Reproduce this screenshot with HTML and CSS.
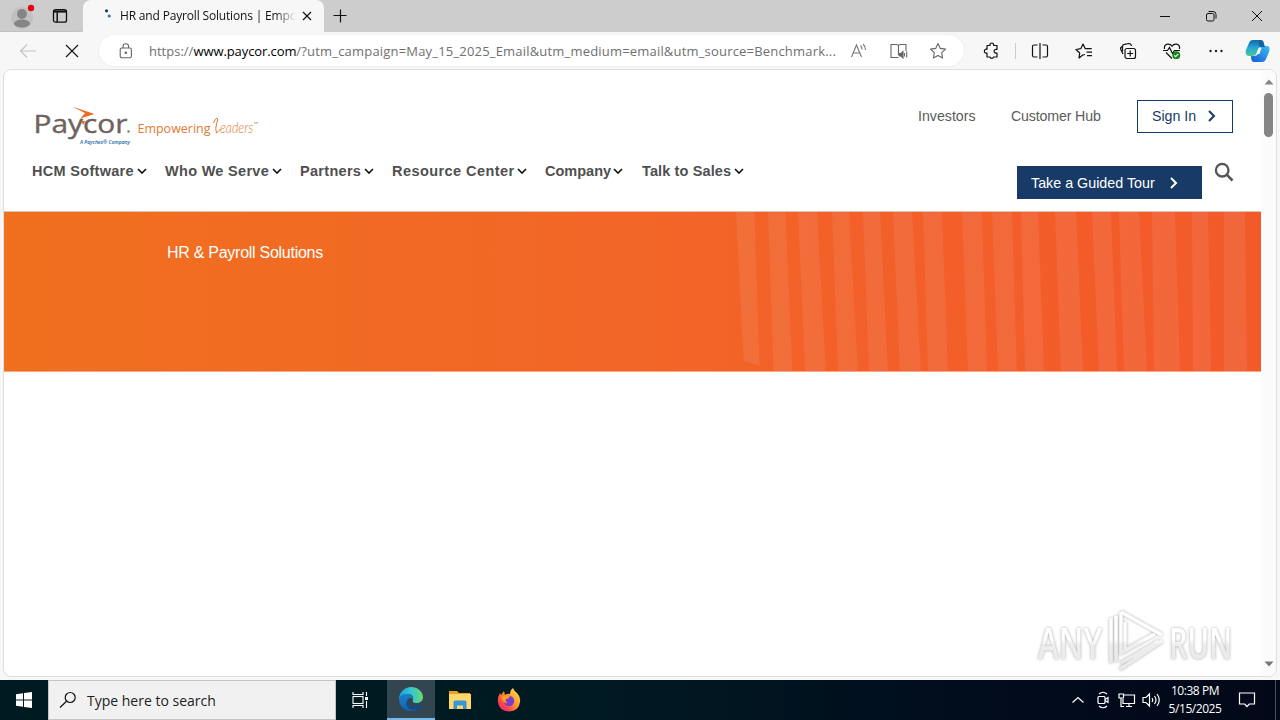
FILE: index.html
```html
<!DOCTYPE html>
<html lang="en">
<head>
<meta charset="utf-8">
<title>HR and Payroll Solutions | Empowering Leaders</title>
<link rel="stylesheet" href="styles.css">
</head>
<body>
<div class="desktop">
  <header class="titlebar">
    <div class="tab-tools">
      <svg class="profile" width="26" height="28" viewBox="0 0 26 28"><circle cx="13" cy="16" r="11" fill="#c0c0c0"/><circle cx="13" cy="12" r="5" fill="#858585"/><ellipse cx="13" cy="21.500" rx="8" ry="4" fill="#858585"/><circle cx="22" cy="6" r="3.200" fill="#e30613"/></svg>
      <svg width="16" height="16" viewBox="0 0 16 16" fill="none" stroke="#111" stroke-width="1.300"><rect x="1.500" y="1.700" width="13" height="12.500" rx="2"/><path d="M1.500 3.500h13" stroke-width="2.200"/><path d="M5.200 4.300v10" stroke-width="1.500"/></svg>
    </div>
    <div class="tab">
      <svg width="12" height="14" viewBox="0 0 12 14"><circle cx="2.500" cy="1.800" r="1.600" fill="#123e6b"/><circle cx="5.200" cy="7" r="1.600" fill="#2d77b8"/></svg>
      <span class="tab-title">HR and Payroll Solutions | Empow</span>
      <svg width="10" height="10" viewBox="0 0 10 10" stroke="#111" stroke-width="1.200"><path d="M1 1l8 8M9 1l-8 8"/></svg>
    </div>
    <svg class="newtab" width="14" height="14" viewBox="0 0 14 14" stroke="#111" stroke-width="1.200"><path d="M7.500 .5v13M.5 6.500h13"/></svg>
    <div class="win-buttons">
      <svg width="12" height="12" viewBox="0 0 12 12" stroke="#111"><path d="M1 6.500h10"/></svg>
      <svg width="12" height="12" viewBox="0 0 12 12" fill="none" stroke="#111"><rect x="1.500" y="3.500" width="7.500" height="7.500" rx="1.500"/><path d="M3.500 1.500h4.500a3 3 0 0 1 3 3v4"/></svg>
      <svg width="12" height="12" viewBox="0 0 12 12" stroke="#111"><path d="M1 1l10 10M11 1L1 11"/></svg>
    </div>
  </header>

  <div class="toolbar">
    <svg class="back" width="18" height="16" viewBox="0 0 18 16" fill="none" stroke="#c4c4c4" stroke-width="1.200"><path d="M17 8H1.500M8 1.500L1.500 8 8 14.500"/></svg>
    <svg class="stop" width="14" height="14" viewBox="0 0 14 14" stroke="#111" stroke-width="1.100"><path d="M1 1l12 12M13 1L1 13"/></svg>
    <div class="address">
      <svg width="14" height="16" viewBox="0 0 14 16" fill="none" stroke="#666" stroke-width="1.100"><rect x="1.200" y="5" width="11.200" height="9.800" rx="1.600"/><path d="M4 5V3.500a2.800 2.800 0 0 1 5.600 0V5"/><circle cx="6.800" cy="9.800" r=".7" fill="#666"/></svg>
      <span class="url"><span class="scheme">https://</span><b>www.paycor.com</b><span class="query">/?utm_campaign=May_15_2025_Email&amp;utm_medium=email&amp;utm_source=Benchmark...</span></span>
      <svg width="18" height="16" viewBox="0 0 18 16" fill="none" stroke="#777" stroke-width="1.100"><path d="M1.500 14L6.500 2l5 12M3.200 10h6.600M10.500 2.500a5 5 0 0 1 1.500 4M13 1a8 8 0 0 1 2.500 6"/></svg>
      <svg width="18" height="16" viewBox="0 0 18 16" fill="none" stroke="#666" stroke-width="1.100"><path d="M8.500 14.500H1V1.500h5.500q2 0 2 2v9M8.500 3.500q0-2 2-2H16V8"/><path d="M9.500 10.500v2.500h1.500l2 2V8.500l-2 2z" fill="#666"/><path d="M14.500 10v3.500M16.700 8.500v6"/></svg>
      <svg width="18" height="18" viewBox="0 0 18 18" fill="none" stroke="#666" stroke-width="1.100" stroke-linejoin="round"><path d="M9 1.500l2.300 4.900 5.200.7-3.800 3.600.9 5.300L9 13.500 4.400 16l.9-5.300L1.500 7.100l5.200-.7z"/></svg>
    </div>
    <div class="actions">
      <svg width="18" height="18" viewBox="0 0 18 18" fill="none" stroke="#111" stroke-width="1.200" stroke-linejoin="round"><path d="M5 3.500h3a1.900 1.900 0 1 1 3.600 0h3.400v3.800h-1a1.900 1.900 0 1 0 0 3.800h1v3.900h-3.400a1.900 1.900 0 0 1-3.600 0H5v-3.900a2 2 0 1 1 0-3.800z"/></svg>
      <i class="divider"></i>
      <svg width="18" height="18" viewBox="0 0 18 18" fill="none" stroke="#111" stroke-width="1.200"><path d="M6.500 3H3a1.500 1.500 0 0 0-1.500 1.500v9A1.500 1.500 0 0 0 3 15h3.500M11.500 3H15a1.500 1.500 0 0 1 1.500 1.500v9A1.500 1.500 0 0 1 15 15h-3.500M9 1v16"/></svg>
      <svg width="18" height="18" viewBox="0 0 18 18" fill="none" stroke="#111" stroke-width="1.200" stroke-linejoin="round"><path d="M10 12.500L7.800 13 4 16l.7-5L1 7.500l4.800-.8L8 2l2.300 4.700h6.400M11.500 10.200H17M12 13.700h5"/></svg>
      <svg width="18" height="18" viewBox="0 0 18 18" fill="none" stroke="#111" stroke-width="1.200"><rect x="6" y="6.500" width="10.500" height="10" rx="2"/><path d="M11.200 8.500v6M8.200 11.500h6M4 12L1.800 7.500Q1 5.500 3 4.500M3.500 9.500V4.500q0-2 2-2.200l4.500-.8q2 0 2.500 2.500"/></svg>
      <svg width="18" height="18" viewBox="0 0 18 18" fill="none" stroke="#111" stroke-width="1.200"><path d="M1.500 7Q.8 3 4.500 2.200 7.500 1.800 9 4.200q1.500-2.400 4.500-2Q17.200 3 16.500 7M3 10.500L9 16.500M0 8.500h4.500l2-3 3 6L11.500 8.500H17"/><circle cx="13.300" cy="13.200" r="3.900" fill="#16831c" stroke="none"/><path d="M11.300 13.300l1.300 1.300 2.700-2.800" stroke="#fff"/></svg>
      <svg width="18" height="18" viewBox="0 0 18 18" fill="#222"><circle cx="3.500" cy="9" r="1.200"/><circle cx="9" cy="9" r="1.200"/><circle cx="14.500" cy="9" r="1.200"/></svg>
      <svg class="copilot" width="26" height="24" viewBox="0 0 26 24"><defs><linearGradient id="cp1" x1="0" y1="0" x2="0" y2="1"><stop offset="0" stop-color="#16679d"/><stop offset=".5" stop-color="#24a7df"/><stop offset="1" stop-color="#52c88a"/></linearGradient><linearGradient id="cp2" x1="0" y1="1" x2="1" y2="0"><stop offset="0" stop-color="#155bd5"/><stop offset="1" stop-color="#39bdf5"/></linearGradient></defs><path d="M8 1h8c3 0 3 4 4 7h-4c-2 0-3 2-4 5s-2 4-5 4H4c-3 0-4-3-3-6l3-7q1-3 4-3z" fill="url(#cp1)"/><path d="M17 23H9c-2 0-3-2-3-6h3c3 0 4-2 5-5s2-5 5-5h3c3 0 3 3 2 6l-3 7q-1 3-4 3z" fill="url(#cp2)"/><path d="M15 1c4 0 3 4 5 7h-5c-1-2-2-4 0-7z" fill="#1263a4"/><path d="M13.500 9h3l-2 6h-3z" fill="#f7f7f7"/></svg>
    </div>
  </div>

  <main class="viewport">
    <div class="page">
      <div class="site-head">
        <div class="site-left">
          <svg class="logo" width="234" height="46" viewBox="32 102 234 46">
            <text class="brand" x="33.500" y="132.500" textLength="94" lengthAdjust="spacingAndGlyphs">Paycor</text>
            <path d="M72 106.500l22.500 7.500-14 4.500 4.500-5.500z" fill="#ef6b21"/>
            <path d="M81.500 121h4l-2.500 4z" fill="#ef6b21"/>
            <rect x="127.500" y="130.500" width="2" height="2" fill="#6e625d"/>
            <text class="sub" x="80" y="143.800" textLength="50" lengthAdjust="spacingAndGlyphs">A Paychex® Company</text>
            <text class="tagline" x="137.500" y="133" textLength="73" lengthAdjust="spacingAndGlyphs">Empowering</text>
            <path d="M213.500 123q2-5 3.500-5 1.500 1-.5 6-1.500 5 0 9 2-1.500 4-4" fill="none" stroke="#e47935"/>
            <text class="script" x="220" y="132.500" textLength="33" lengthAdjust="spacingAndGlyphs">eaders</text>
            <text class="tm" x="253.500" y="126">™</text>
          </svg>
          <nav class="main-nav">
            <span class="n1">HCM Software<svg width="10" height="7" viewBox="0 0 10 7"><path d="M1 1l4 4 4-4"/></svg></span>
            <span class="n2">Who We Serve<svg width="10" height="7" viewBox="0 0 10 7"><path d="M1 1l4 4 4-4"/></svg></span>
            <span class="n3">Partners<svg width="10" height="7" viewBox="0 0 10 7"><path d="M1 1l4 4 4-4"/></svg></span>
            <span class="n4">Resource Center<svg width="10" height="7" viewBox="0 0 10 7"><path d="M1 1l4 4 4-4"/></svg></span>
            <span class="n5">Company<svg width="10" height="7" viewBox="0 0 10 7"><path d="M1 1l4 4 4-4"/></svg></span>
            <span class="n6">Talk to Sales<svg width="10" height="7" viewBox="0 0 10 7"><path d="M1 1l4 4 4-4"/></svg></span>
          </nav>
        </div>
        <div class="site-right">
          <div class="utility">
            <span class="investors">Investors</span><span class="hub">Customer Hub</span>
            <a class="sign-in"><span>Sign In</span><svg width="8" height="12" viewBox="0 0 8 12"><path d="M1 1l5 5-5 5"/></svg></a>
          </div>
          <div class="cta-row">
            <a class="tour"><span>Take a Guided Tour</span><svg width="8" height="12" viewBox="0 0 8 12"><path d="M1 1l5 5-5 5"/></svg></a>
            <svg class="search" width="20" height="20" viewBox="0 0 20 20" fill="none" stroke="#555" stroke-width="2.300"><circle cx="8.200" cy="8.200" r="6.300"/><path d="M12.700 12.700l5.800 5.800" stroke-width="2.600"/></svg>
          </div>
        </div>
      </div>
      <section class="hero">
        <svg class="stripes" width="529" height="159" viewBox="732 212 529 159" fill="#eee" fill-opacity=".09">
          <path d="M736 212h18.500l5 154-16-5zM768 212h17.500l7 160h-19zM798 212h19l9 160h-21zM832 212h17l9 160h-20zM863 212h17l8 160h-19zM893 212h19l9 160h-21zM923 212h19l6 160h-20zM962 212h20l5 160h-19zM992 212h20l5 160h-19zM1021 212h17l6 160h-19zM1055 212h21l7 160h-22zM1092 212h19l6 160h-18zM1119 212h20l8 160h-23zM1152 212h23l5 160h-26zM1192 212h16l3 160h-18zM1224 212h21l2 160h-23z"/>
        </svg>
        <h1>HR &amp; Payroll Solutions</h1>
      </section>
    </div>
    <div class="scrollbar">
      <svg width="10" height="6" viewBox="0 0 10 6"><path d="M.5 5.500L5 .5l4.500 5z" fill="#858585"/></svg>
      <i class="thumb"></i>
      <svg class="down" width="10" height="6" viewBox="0 0 10 6"><path d="M.5.5L5 5.500 9.500.5z" fill="#777"/></svg>
    </div>
    <svg class="watermark" width="204" height="70" viewBox="1034 606 204 70">
      <defs><linearGradient id="wm" gradientUnits="userSpaceOnUse" x1="0" y1="612" x2="0" y2="672"><stop offset="0" stop-color="#fff"/><stop offset=".45" stop-color="#fff"/><stop offset=".55" stop-color="#ededed"/><stop offset="1" stop-color="#e9e9e9"/></linearGradient></defs>
      <g class="mark">
        <text x="1038" y="659" textLength="64" lengthAdjust="spacingAndGlyphs">ANY</text>
        <text x="1169" y="659" textLength="63" lengthAdjust="spacingAndGlyphs">RUN</text>
        <path d="M1121 612l41 23M1121 612v41l34-19M1125 622v28l28-15M1111 618v45M1116 616v46M1162 641l-42 28M1121 663l38-22"/>
      </g>
    </svg>
  </main>

  <footer class="taskbar">
    <div class="start"><svg width="16" height="16" viewBox="0 0 16 16" fill="#fff"><path d="M0 2.200L7 1.200V7.500H0zM8 1l8-1v7.500H8zM0 8.500h7v6.300L0 13.800zM8 8.500h8V16l-8-1z"/></svg></div>
    <div class="searchbox"><svg width="18" height="18" viewBox="0 0 18 18" fill="none" stroke="#111" stroke-width="1.200"><circle cx="11.200" cy="6.500" r="5"/><path d="M7.500 10.200L1 16.500"/></svg><span>Type here to search</span></div>
    <div class="app"><svg width="18" height="18" viewBox="0 0 18 18" fill="none" stroke="#fff" stroke-width="1.100"><path d="M2 1v2.500h10V1M2 17v-2.500h10V17M15.500 1v4M15.500 10v7"/><rect x="2" y="5.500" width="10" height="7"/><path d="M14 7.500h3" stroke-width="3"/></svg></div>
    <div class="app active"><svg width="26" height="26" viewBox="0 0 26 26"><defs><linearGradient id="e1"><stop offset="0" stop-color="#219edf"/><stop offset=".5" stop-color="#32c5d6"/><stop offset="1" stop-color="#69dc6b"/></linearGradient><linearGradient id="e2" x1="0" y1="0" x2="0" y2="1"><stop offset="0" stop-color="#1682c9"/><stop offset="1" stop-color="#1460b1"/></linearGradient></defs><path d="M1 13C1 6 7 1 13 1c7 0 12 5 12 10 0 4-3 6-7 6-3 0-4-1-3-3 1-3-1-6-5-6-5 0-8 3-9 5z" fill="url(#e1)"/><path d="M1 13c1-4 4-5 8-5 4 0 7 3 6 6-1-3-6-3-6 2 0 4 4 7 8 6 3 0 5-1 7-3-3 5-7 6-11 6C6 25 1 20 1 13z" fill="url(#e2)"/><path d="M9 15c0 5 5 6 9 5 3-1 5-1 6 0-3 4-7 5-10 4-5-1-7-6-5-9z" fill="#124b8e"/></svg></div>
    <div class="app"><svg width="24" height="22" viewBox="0 0 24 22"><path d="M1 2h8l2 2h11v5H1z" fill="#e5a323"/><path d="M1 5h22v15H1z" fill="#ffd76b"/><path d="M5.500 20v-7q0-1.500 1.500-1.500h10q1.500 0 1.500 1.500v7h-3.500v-3.500h-6V20z" fill="#3796d8"/></svg></div>
    <div class="app"><svg width="24" height="26" viewBox="0 0 24 26"><defs><linearGradient id="f1" x1="1" y1="0" x2="0" y2="1"><stop offset="0" stop-color="#fff04d"/><stop offset=".45" stop-color="#ff9630"/><stop offset=".75" stop-color="#ff3d4f"/><stop offset="1" stop-color="#df247f"/></linearGradient></defs><path d="M3 6l1 2 3-4 1 4q3-2 5-1 0-4 3-6 1 3 4 5 4 4 3 9-1 9-11 9.500Q2 24 .8 14.500.5 10 3 6z" fill="url(#f1)"/><circle cx="12" cy="14" r="5.200" fill="#7c3ccb"/><path d="M4 10q3-2 5-1h4q-1 3-4 3-1 3 2 4-5 1-7-6z" fill="#ff9a22"/></svg></div>
    <div class="tray">
      <svg class="t1" width="12" height="8" viewBox="0 0 12 8"><path d="M.5 6.500l5.500-5 5.500 5"/></svg>
      <svg class="t2" width="14" height="18" viewBox="0 0 14 18"><rect x="2" y="5.500" width="7" height="7" rx="1"/><path d="M9 8.500l3-2v5l-3-2M3 3q4-3.500 8 0M3 15q4 3.500 8 0"/></svg>
      <svg class="t3" width="18" height="16" viewBox="0 0 18 16"><path d="M5 3h11.500v8.500H5V7M8 14.500h6M11 11.500v3M1 2h4.500v4H1zM3 6v8.500h3"/></svg>
      <svg class="t4" width="18" height="16" viewBox="0 0 18 16"><path d="M1 5.500v5h3l3.500 3.500V2L4 5.500zM10 6q1.500 2 0 4M12.500 4q3 4 0 8M15 2q4.500 6 0 12"/></svg>
      <div class="clock"><span>10:38 PM</span><span>5/15/2025</span></div>
      <svg class="t5" width="18" height="18" viewBox="0 0 18 18"><path d="M1.500 2h15v11h-5.200L9 15.500 6.700 13H1.500z"/></svg>
      <i class="peek"></i>
    </div>
  </footer>
</div>
</body>
</html>
```
FILE: styles.css
```css
* { box-sizing: border-box; }
body { margin: 0; overflow: hidden; font-family: "Open Sans", "Noto Sans", sans-serif; }
svg { display: block; flex: none; }
.desktop { width: 1280px; height: 720px; display: flex; flex-direction: column; background: #f7f7f7; }

.titlebar { height: 32px; flex: none; display: flex; align-items: center; background: #cdcdcd; }
.tab-tools { width: 83px; height: 32px; display: flex; align-items: center; gap: 17px; padding-left: 9px; border-bottom: 1px solid #c2c2c2; border-radius: 0 0 6px 0; }
.tab { width: 241px; height: 32px; display: flex; align-items: center; padding: 0 12px 0 21px; background: #f7f7f7; border-radius: 8px 8px 0 0; }
.tab-title { width: 175px; margin: 0 7px 0 4px; font-size: 12px; letter-spacing: -.17px; line-height: 20px; color: #111; white-space: nowrap; overflow: hidden; -webkit-mask-image: linear-gradient(90deg, #000 155px, transparent 176px); mask-image: linear-gradient(90deg, #000 155px, transparent 176px); }
.newtab { margin-left: 9px; }
.win-buttons { margin-left: auto; display: flex; gap: 34px; padding-right: 17px; }

.toolbar { height: 37px; flex: none; display: flex; align-items: center; padding-left: 19px; }
.stop { margin-left: 28px; }
.address { width: 865px; height: 31px; display: flex; align-items: center; margin-left: 20px; padding-left: 20px; background: #fff; border-radius: 16px; box-shadow: 0 0 2px #e2e2e2; }
.address svg + svg { margin-left: 21.500px; }
.url { width: 687px; margin: 0 14px 0 16px; display: flex; font-size: 13px; line-height: 20px; color: #707070; white-space: nowrap; }
.scheme { width: 45px; }
.url b { width: 103px; font-weight: 400; letter-spacing: -.1px; color: #000; }
.query { letter-spacing: .19px; }
.actions { display: flex; align-items: center; gap: 26px; margin-left: 18px; }
.divider { width: 1px; height: 16px; margin: 0 -11px; background: #ccc; }
.copilot { margin-left: -6px; }

.viewport { position: relative; width: 1274px; height: 608px; margin-left: 3px; flex: none; display: flex; background: #fff; border: 1px solid #dedede; border-radius: 8px; overflow: hidden; }
.page { width: 1257px; flex: none; font-family: "Liberation Sans", Arial, sans-serif; }
.site-head { height: 142px; display: flex; justify-content: space-between; padding: 0 28px; border-bottom: 1px solid #dfc3b4; }
.logo { margin: 32px 0 0; }
.brand { font: 500 25.500px "Open Sans", sans-serif; fill: #6e625d; stroke: #6e625d; stroke-width: .4; }
.sub { font: italic 600 5.500px "Open Sans", sans-serif; fill: #1769a8; }
.tagline { font: 13.500px "Open Sans", sans-serif; fill: #e47935; }
.script { font: italic 300 15px Lato, sans-serif; fill: #e47935; }
.tm { font: 6px Lato, sans-serif; fill: #e47935; }
.main-nav { display: flex; margin-top: 14px; font-size: 14.500px; font-weight: 700; line-height: 18px; color: #4f4f4f; white-space: nowrap; letter-spacing: .3px; }
.main-nav span { display: flex; align-items: center; justify-content: space-between; margin-right: 18px; }
.main-nav svg { fill: none; stroke: #111; stroke-width: 1.600; }
.n1 { width: 115px; }
.n2 { width: 117px; }
.n3 { width: 74px; }
.n4 { width: 135px; letter-spacing: .43px; }
.n5 { width: 78px; letter-spacing: 0; }
.main-nav .n5 { margin-right: 19px; }
.n6 { width: 102px; letter-spacing: .13px; }
.site-right { display: flex; flex-direction: column; align-items: flex-end; padding-top: 30px; }
.utility, .cta-row { display: flex; }
.utility { font-size: 14.200px; line-height: 32px; color: #5c5c5c; }
.investors { width: 93px; }
.hub { width: 126px; letter-spacing: -.15px; }
.sign-in { width: 96px; height: 33px; display: flex; align-items: center; justify-content: space-between; padding: 0 16px 2px 14px; border: 1px solid #183a66; color: #183a66; }
.sign-in svg, .tour svg { fill: none; stroke: #183a66; stroke-width: 2; }
.cta-row { margin-top: 33px; }
.tour { width: 185px; height: 33px; display: flex; align-items: center; padding-left: 14px; background: #183a66; color: #fff; font-size: 14.300px; }
.tour span { width: 139px; white-space: nowrap; }
.tour svg { stroke: #fff; }
.search { margin: -4px -1px 0 12px; }
.hero { height: 160px; position: relative; background: linear-gradient(90deg, #f0701f, #f26627 50%, #f35f29 70%, #f35a2a); border-bottom: 1px solid #f7a583; }
.stripes { position: absolute; right: 0; top: 0; }
.hero h1 { margin: 0; padding: 31px 0 0 163px; font-size: 16px; font-weight: 400; letter-spacing: -.27px; line-height: 20px; color: #fff; }
.scrollbar { width: 15px; display: flex; flex-direction: column; align-items: center; padding: 9px 0 9px; background: #fbfbfb; }
.thumb { width: 9px; height: 44px; margin-top: 8px; border-radius: 5px; background: #858585; }
.down { margin-top: auto; }
.watermark { position: absolute; left: 1030px; top: 536px; }
.mark { filter: drop-shadow(0 0 1.500px #aaa); }
.mark text { font: 600 43px "Open Sans", sans-serif; fill: url(#wm); }
.mark path { fill: none; stroke: url(#wm); stroke-width: 3.500; stroke-linejoin: round; }

.taskbar { height: 40px; margin-top: auto; flex: none; display: flex; background: linear-gradient(90deg, #001a22, #001a22 45%, #010b1c 80%, #020818); }
.start, .app { width: 48px; display: flex; align-items: center; justify-content: center; }
.searchbox { width: 288px; display: flex; align-items: center; gap: 10px; padding-left: 10px; background: #f1f1f1; border: 1px solid #c4c4c4; font-size: 14px; color: #222; }
.app { width: 49px; }
.app:nth-child(3) { width: 51px; padding-right: 3px; }
.active { width: 48px; background: #33454f; border-bottom: 2px solid #76b9ed; }
.tray { margin-left: auto; display: flex; align-items: center; color: #fff; }
.tray svg { fill: none; stroke: #fff; stroke-width: 1.200; }
.t2 { margin-left: 12px; }
.t3 { margin-left: 8px; }
.t4 { margin-left: 6px; }
.clock { width: 68px; display: flex; flex-direction: column; align-items: center; font-size: 12px; line-height: 18px; letter-spacing: -.45px; margin: 0 9px 0 1px; }
.peek { width: 1px; height: 40px; margin: 0 4px 0 19px; background: #46505d; }
```
